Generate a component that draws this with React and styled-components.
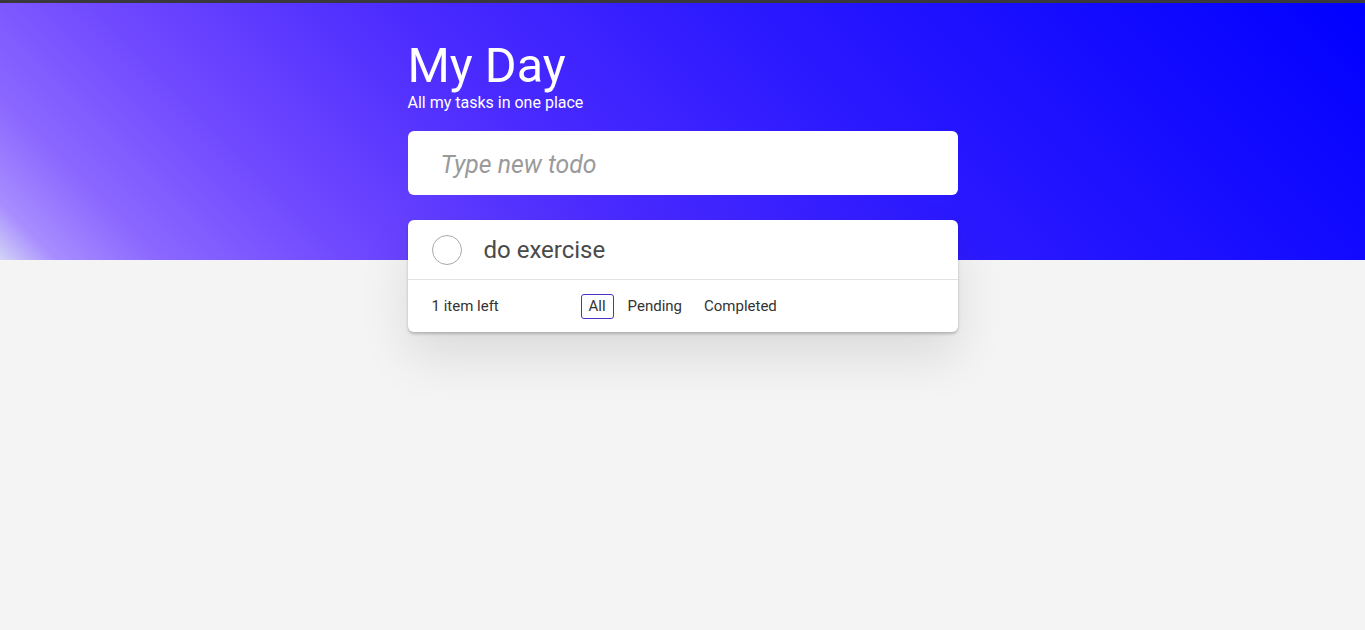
import styled, { createGlobalStyle } from "styled-components";
import { useState } from "react";

const GlobalStyle = createGlobalStyle`
* {
  box-sizing: border-box;
}
body {
  margin: 0;
  font-family: Roboto, "Liberation Sans", sans-serif;
  background-color: #f4f4f4;
}
`

export default function App() {
    const [todos] = useState([{ id: 1, text: "do exercise", done: false }])
    const [filter, setFilter] = useState("All")
    const left = todos.filter((t) => !t.done).length

    return (
        <Page>
            <GlobalStyle />
            <Content>
                <Title>My Day</Title>
                <Subtitle>All my tasks in one place</Subtitle>
                <NewTodo autoFocus placeholder="Type new todo" />
                <Card>
                    {todos.map((todo) => (
                        <Item key={todo.id}>
                            <Check />
                            <ItemText>{todo.text}</ItemText>
                        </Item>
                    ))}
                    <Footer>
                        <Count>{left} item left</Count>
                        <Filters>
                            {["All", "Pending", "Completed"].map((name) => (
                                <FilterButton
                                    key={name}
                                    $active={filter === name}
                                    onClick={() => setFilter(name)}
                                >
                                    {name}
                                </FilterButton>
                            ))}
                        </Filters>
                    </Footer>
                </Card>
            </Content>
        </Page>
    )
}

const Page = styled.div`
min-height: 100vh;
border-top: 3px solid #39393d;
background:
  linear-gradient(45deg, #d2d4f6 0%, #a88dff 3.5%, #8b67ff 10%, #6f48ff 22%, #4b2bff 40%, #2a18ff 62%, #0000ff 100%)
  top left / 100% 257px no-repeat,
  #f4f4f4;
`

const Content = styled.div`
width: 550px;
margin: 0 auto;
padding-top: 38px;
`

const Title = styled.h1`
margin: 0;
font-size: 48.5px;
font-weight: 400;
line-height: 49px;
color: #ffffff;
`

const Subtitle = styled.p`
margin: 3px 0 0;
font-size: 16px;
line-height: 19px;
color: #ffffff;
`

const NewTodo = styled.input`
display: block;
width: 100%;
height: 64px;
margin-top: 19px;
padding: 2px 20px 0 33px;
border: none;
border-radius: 6px;
outline: none;
background: #ffffff;
font-family: Roboto, "Liberation Sans", sans-serif;
font-size: 24.8px;
color: #444;
caret-color: #222;
&::placeholder {
  font-style: italic;
  color: #9a9a9a;
}
`

const Card = styled.div`
margin-top: 25px;
background: #ffffff;
border-radius: 6px;
box-shadow: 0 2px 3px rgba(0, 0, 0, 0.22), 0 25px 50px rgba(0, 0, 0, 0.1);
`

const Item = styled.div`
display: flex;
align-items: center;
gap: 22px;
height: 60px;
padding: 1px 24px 0;
border-bottom: 1px solid #e2e2e2;
`

const Check = styled.span`
width: 30px;
height: 30px;
border: 1px solid #a8a8a8;
border-radius: 50%;
flex-shrink: 0;
`

const ItemText = styled.span`
font-size: 24px;
color: #4a4a4a;
`

const Footer = styled.div`
display: flex;
align-items: center;
height: 52px;
padding: 0 24px;
font-size: 15px;
color: #333;
`

const Count = styled.span`
width: 149px;
`

const Filters = styled.div`
display: flex;
gap: 6px;
`

const FilterButton = styled.button`
padding: 3px 7px;
border: 1px solid ${(p) => (p.$active ? "#4a33c8" : "transparent")};
border-radius: 3px;
background: none;
font-family: Roboto, "Liberation Sans", sans-serif;
font-size: 15px;
line-height: 17px;
color: #333;
cursor: pointer;
`
